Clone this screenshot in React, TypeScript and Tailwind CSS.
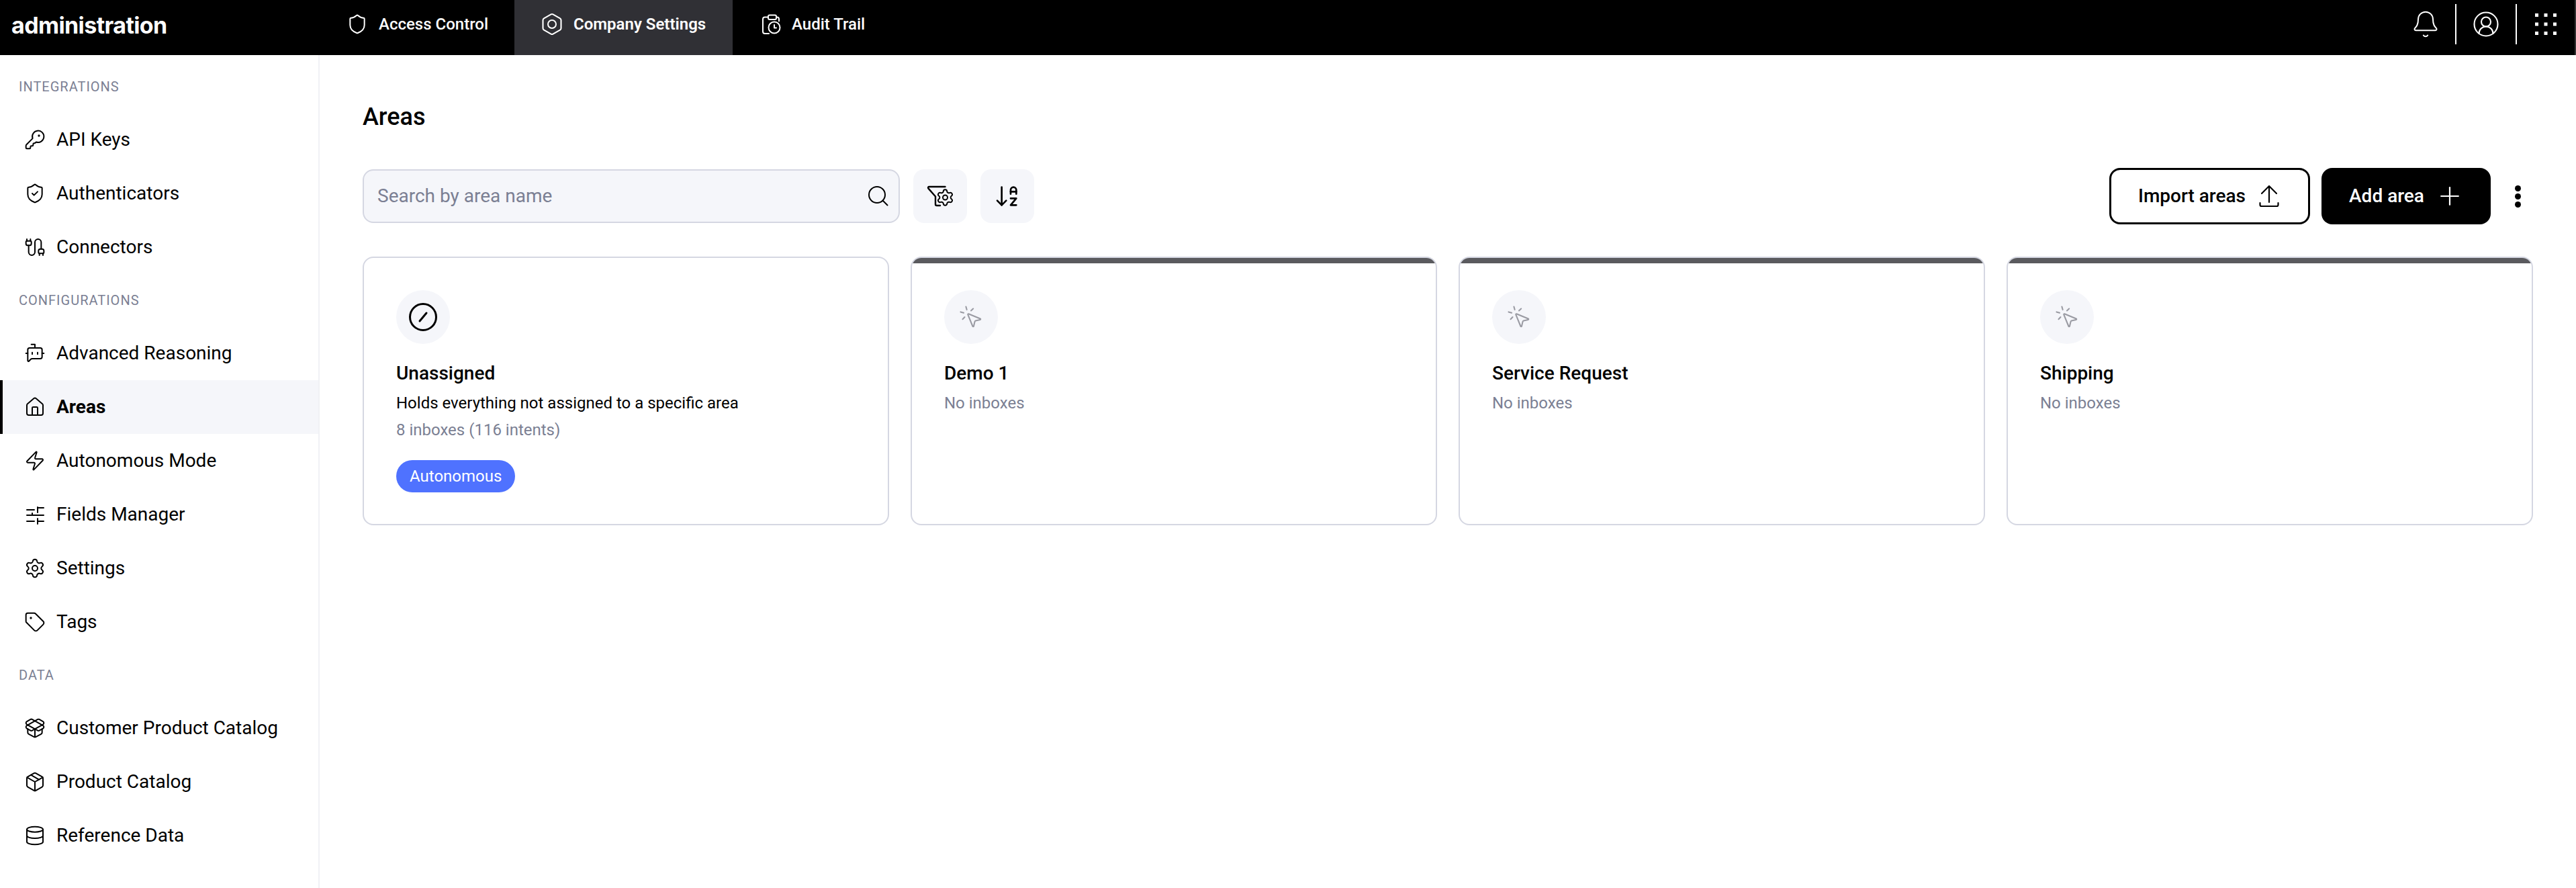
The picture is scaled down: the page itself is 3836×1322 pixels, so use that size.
import React from "react";
import {
  KeyRound, ShieldCheck, Cable, BotMessageSquare, House, Zap, Settings, Tag, PackageOpen, Package, Database,
  Shield, Hexagon, Bell, CircleUserRound, ArrowDownAZ, Plus, MousePointerClick,
} from "lucide-react";

const ic = { size: 32, strokeWidth: 1.5 };

function Sliders() {
  return (
    <svg width="32" height="32" viewBox="0 0 32 32" fill="none" stroke="currentColor" strokeWidth="2" strokeLinecap="round">
      <path d="M4 9h11M20 5v8M20 6h9M4 17h25M12 14v3M4 26h11M20 22v8M20 26h9" />
    </svg>
  );
}

function AuditIcon() {
  return (
    <svg width="32" height="32" viewBox="0 0 32 32" fill="none" stroke="currentColor" strokeWidth="2" strokeLinecap="round" strokeLinejoin="round">
      <rect x="13" y="2.5" width="12" height="6.5" rx="2" />
      <path d="M13 5.5H8a3 3 0 0 0-3 3V27a3 3 0 0 0 3 3h6M25 5.5h1a3 3 0 0 1 3 3v3" />
      <circle cx="22" cy="21" r="8.5" />
      <path d="M22 17v4.5h3" />
    </svg>
  );
}

function GridDots() {
  const pts = [0, 13.5, 27];
  return (
    <svg width="32" height="32" viewBox="0 0 32 32" fill="currentColor">
      {pts.map((y) => pts.map((x) => <rect key={`${x}-${y}`} x={x} y={y} width="5" height="5" />))}
    </svg>
  );
}

function FilterGear() {
  return (
    <svg width="40" height="32" viewBox="0 0 40 32" fill="none" stroke="currentColor" strokeWidth="2.4" strokeLinecap="round" strokeLinejoin="round">
      <path d="M27.5 2H3.5a1.5 1.5 0 0 0-1.2 2.4L13 16.5V28a2 2 0 0 0 2 2h5" />
      <Settings x="13.5" y="4" width="28" height="28" strokeWidth="1.7" />
    </svg>
  );
}

function SearchGlyph() {
  return (
    <svg width="32" height="32" viewBox="0 0 32 32" fill="none" stroke="#000" strokeWidth="2" strokeLinecap="round">
      <circle cx="14" cy="14" r="12" />
      <path d="M22.5 22.5L29.5 29.5" />
    </svg>
  );
}

function UploadGlyph() {
  return (
    <svg width="30" height="36" viewBox="0 0 30 36" fill="none" stroke="currentColor" strokeWidth="2.2" strokeLinecap="round" strokeLinejoin="round">
      <path d="M15 27V3M4 14L15 3l11 11M1.5 28v3a2 2 0 0 0 2 2h23a2 2 0 0 0 2-2v-3" />
    </svg>
  );
}

function SlashCircle() {
  return (
    <svg width="44" height="44" viewBox="0 0 44 44" fill="none" stroke="#000" strokeWidth="3" strokeLinecap="round">
      <circle cx="22" cy="22" r="19.5" />
      <path d="M17 28l10-12" />
    </svg>
  );
}

const groups = [
  { label: "INTEGRATIONS", items: [
    { name: "API Keys", icon: <KeyRound {...ic} /> },
    { name: "Authenticators", icon: <ShieldCheck {...ic} /> },
    { name: "Connectors", icon: <Cable {...ic} /> },
  ]},
  { label: "CONFIGURATIONS", items: [
    { name: "Advanced Reasoning", icon: <BotMessageSquare {...ic} /> },
    { name: "Areas", icon: <House {...ic} />, active: true },
    { name: "Autonomous Mode", icon: <Zap {...ic} /> },
    { name: "Fields Manager", icon: <Sliders /> },
    { name: "Settings", icon: <Settings {...ic} /> },
    { name: "Tags", icon: <Tag {...ic} /> },
  ]},
  { label: "DATA", items: [
    { name: "Customer Product Catalog", icon: <PackageOpen {...ic} /> },
    { name: "Product Catalog", icon: <Package {...ic} /> },
    { name: "Reference Data", icon: <Database {...ic} /> },
  ]},
];

function Tab({ icon, label, active, width }: { icon: React.ReactNode; label: string; active?: boolean; width: string }) {
  return (
    <div className={`flex items-center gap-4 pl-10 pb-[10px] text-[24px] text-white ${width} ${active ? "bg-[#303035] font-semibold" : "font-medium"}`}>
      {icon}
      <span className="font-['Roboto',sans-serif] whitespace-nowrap">{label}</span>
    </div>
  );
}

function Sidebar() {
  return (
    <aside className="w-[476px] shrink-0 border-r-2 border-[#f0f1f5] pt-2 font-['Roboto',sans-serif]">
      {groups.map((g) => (
        <div key={g.label}>
          <div className="flex h-[78px] items-center pl-7 text-[20px] leading-none tracking-[1px] text-[#7b7f93]">{g.label}</div>
          {g.items.map((it: any) => (
            <div
              key={it.name}
              className={`flex h-20 items-center gap-4 pl-9 text-[28px] text-black ${it.active ? "relative bg-[#f5f6fa] font-bold" : ""}`}
            >
              {it.active && <span className="absolute top-0 bottom-0 left-0 w-1 bg-black" />}
              {it.icon}
              <span>{it.name}</span>
            </div>
          ))}
        </div>
      ))}
    </aside>
  );
}

function Card({ title, sub, unassigned }: { title: string; sub?: string; unassigned?: boolean }) {
  return (
    <div className="h-[400px] overflow-hidden rounded-2xl border-2 border-[#d5d7e2] bg-white">
      {!unassigned && <div className="h-2 bg-[#5a5a5e]" />}
      <div className={`px-12 font-['Roboto',sans-serif] ${unassigned ? "pt-12" : "pt-10"}`}>
        <div className="flex h-20 w-20 items-center justify-center rounded-full bg-[#f5f6fa]">
          {unassigned ? <SlashCircle /> : <MousePointerClick size={38} strokeWidth={1.3} className="text-[#9a9ba3]" />}
        </div>
        <div className="mt-6 text-[28px] leading-10 font-medium text-black">{title}</div>
        {unassigned ? (
          <>
            <div className="mt-[6px] text-[24px] leading-9 text-black">Holds everything not assigned to a specific area</div>
            <div className="mt-1 text-[24px] leading-9 text-[#7b7f93]">8 inboxes (116 intents)</div>
            <div className="mt-[27px] inline-flex h-12 items-center rounded-full bg-[#4f72ff] px-5 text-[24px] text-white">Autonomous</div>
          </>
        ) : (
          <div className="mt-[6px] text-[24px] leading-9 text-[#7b7f93]">{sub}</div>
        )}
      </div>
    </div>
  );
}

export default function App() {
  return (
    <div className="flex min-h-screen flex-col bg-white">
      <header className="flex h-[82px] shrink-0 items-stretch border-r-2 border-[#333] bg-black text-white">
        <div className="flex w-[476px] shrink-0 items-center pb-[8px] pl-[17px] font-['Inter',sans-serif] text-[34px] font-bold tracking-[-0.6px]">administration</div>
        <Tab width="w-[290px]" icon={<Shield {...ic} />} label="Access Control" />
        <Tab
          width="w-[325px]"
          active
          icon={
            <span className="relative -mx-0.5 flex h-9 w-9 items-center justify-center">
              <Hexagon size={36} strokeWidth={1.4} />
              <span className="absolute h-[14px] w-[14px] rounded-full border-2 border-white" />
            </span>
          }
          label="Company Settings"
        />
        <Tab width="w-[240px]" icon={<AuditIcon />} label="Audit Trail" />
        <div className="ml-auto flex items-start pt-[6px]">
          <div className="flex h-[60px] w-[90px] items-center justify-center border-r-2 border-white"><Bell size={44} strokeWidth={1.1} /></div>
          <div className="flex h-[60px] w-[90px] items-center justify-center border-r-2 border-white"><CircleUserRound size={42} strokeWidth={1.2} /></div>
          <div className="flex h-[60px] w-[86px] items-center justify-center"><GridDots /></div>
        </div>
      </header>
      <div className="flex flex-1">
        <Sidebar />
        <main className="min-w-0 flex-1 pt-[65px] pr-[64px] pl-16 font-['Roboto',sans-serif]">
          <h1 className="text-[36px] leading-[54px] font-medium text-black">Areas</h1>
          <div className="mt-[49px] flex h-[84px] items-center">
            <div className="flex h-20 w-[800px] items-center justify-between rounded-2xl border-2 border-[#d5d7e2] bg-[#f5f6fa] pr-[14px] pl-5 text-[28px] text-[#7b7f93]">
              <span>Search by area name</span>
              <SearchGlyph />
            </div>
            <button className="ml-5 flex h-20 w-20 items-center justify-center rounded-2xl bg-[#f5f6fa] text-black"><FilterGear /></button>
            <button className="ml-5 flex h-20 w-20 items-center justify-center rounded-2xl bg-[#f5f6fa] text-black"><ArrowDownAZ size={40} strokeWidth={1.6} /></button>
            <button className="ml-auto flex h-[84px] w-[299px] items-center justify-center gap-[20px] rounded-2xl border-[3px] border-black bg-white pr-[3px] text-[28px] font-medium text-black">
              Import areas <UploadGlyph />
            </button>
            <button className="ml-[17px] flex h-[84px] w-[252px] items-center justify-center gap-6 rounded-2xl bg-black pr-[6px] text-[28px] font-medium text-white">
              Add area <Plus size={44} strokeWidth={1.2} className="-mx-2" />
            </button>
            <div className="ml-[17px] flex w-[46px] flex-col items-center gap-[3px]">
              <span className="h-[9px] w-[9px] rounded-full bg-black" />
              <span className="h-[9px] w-[9px] rounded-full bg-black" />
              <span className="h-[9px] w-[9px] rounded-full bg-black" />
            </div>
          </div>
          <div className="mt-12 grid grid-cols-4 gap-8">
            <Card unassigned title="Unassigned" />
            <Card title="Demo 1" sub="No inboxes" />
            <Card title="Service Request" sub="No inboxes" />
            <Card title="Shipping" sub="No inboxes" />
          </div>
        </main>
      </div>
    </div>
  );
}
